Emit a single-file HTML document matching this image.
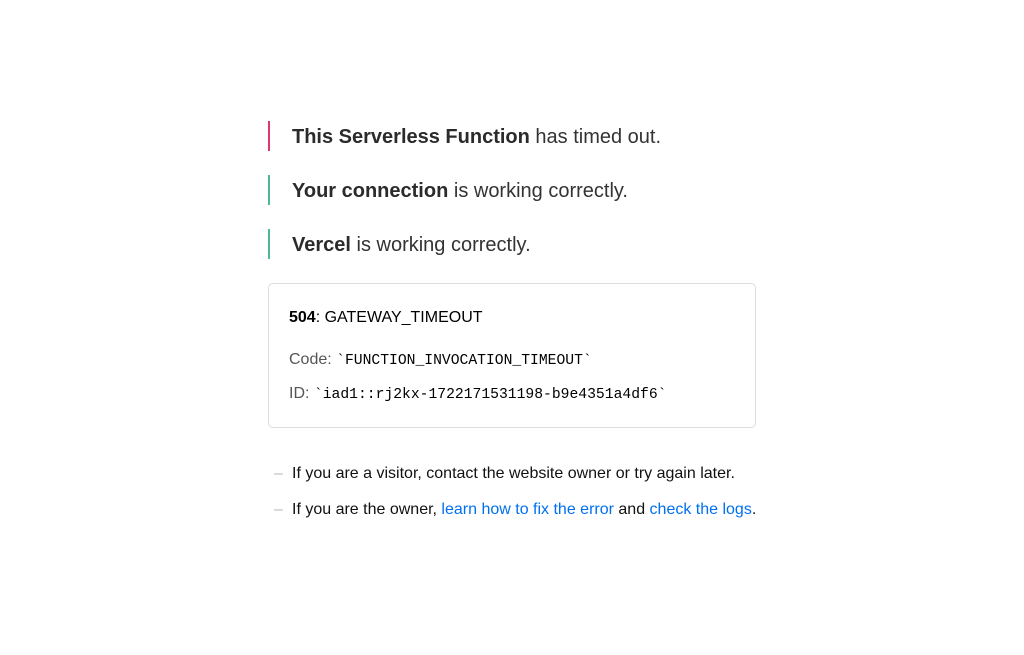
<!DOCTYPE html>
<html><head><style>
body{margin:0;background:#fff;font-family:"Liberation Sans",sans-serif;}
.w{position:absolute;left:268px;width:488px;top:0}
.h{position:absolute;left:0;height:30px;border-left:2px solid #50b796;padding-left:22px;font-size:20px;line-height:32px;color:#333;white-space:nowrap}
.h b{color:#2b2b2b}
.box{position:absolute;left:0;top:283px;width:486px;height:143px;border:1px solid #ddd;border-radius:5px}
.t{position:absolute;left:20px;font-size:16px;white-space:nowrap}
code{font-family:"Liberation Mono",monospace;font-size:14.7px;color:#000}
.li{position:absolute;left:24px;font-size:16px;color:#111;white-space:nowrap;line-height:20px}
.li:before{content:"–";position:absolute;left:-18px;color:#bbb}
a{color:#0070f3;text-decoration:none}
</style></head><body>
<div class="w">
<div class="h" style="top:121px;border-color:#e2366f"><b>This Serverless Function</b> has timed out.</div>
<div class="h" style="top:175px"><b>Your connection</b> is working correctly.</div>
<div class="h" style="top:229px"><b>Vercel</b> is working correctly.</div>
<div class="box">
<div class="t" style="top:25px;color:#000"><b>504</b>: GATEWAY_TIMEOUT</div>
<div class="t" style="top:67px;color:#555">Code: <code>`FUNCTION_INVOCATION_TIMEOUT`</code></div>
<div class="t" style="top:101px;color:#555">ID: <code>`iad1::rj2kx-1722171531198-b9e4351a4df6`</code></div>
</div>
<div class="li" style="top:464px">If you are a visitor, contact the website owner or try again later.</div>
<div class="li" style="top:500px">If you are the owner, <a>learn how to fix the error</a> and <a>check the logs</a>.</div>
</div>
</body></html>
